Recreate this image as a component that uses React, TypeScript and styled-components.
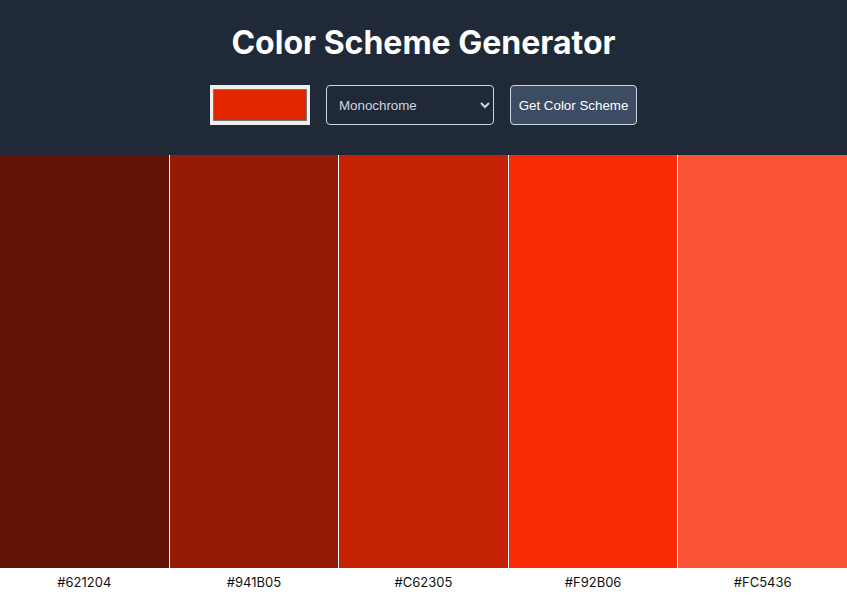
import React, { useState } from "react";
import styled, { createGlobalStyle } from "styled-components";

const Global = createGlobalStyle`
  html, body { margin: 0; padding: 0; background: #ffffff; }
  body { font-family: Inter, "Liberation Sans", sans-serif; }
  * { box-sizing: border-box; }
`;

const Header = styled.header`
  background: #1f2937;
  padding: 24px 0 30px;
  display: flex;
  flex-direction: column;
  align-items: center;
`;

const Title = styled.h1`
  margin: 0 0 23px;
  font-family: Inter, "Liberation Sans", sans-serif;
  font-weight: 700;
  font-size: 32px;
  line-height: 38px;
  color: #ffffff;
`;

const Controls = styled.form`
  display: flex;
  gap: 16px;
  align-items: center;
`;

const ColorInput = styled.input`
  width: 100px;
  height: 40px;
  padding: 4px 3px;
  border: none;
  background: #efefef;
  cursor: pointer;
  &::-webkit-color-swatch-wrapper { padding: 0; }
  &::-webkit-color-swatch { border: 1px solid #777777; }
`;

const Select = styled.select`
  width: 168px;
  height: 40px;
  padding: 0 6px 0 8px;
  background: #1f2937;
  color: #d1d5db;
  border: 1px solid #cbd5e1;
  border-radius: 4px;
  font-family: "Liberation Sans", Arial, sans-serif;
  font-size: 13.33px;
  font-weight: 400;
`;

const Button = styled.button`
  height: 40px;
  width: 127px;
  padding: 0;
  background: #3e4c63;
  color: #ffffff;
  border: 1px solid #cbd5e1;
  border-radius: 4px;
  font-family: "Liberation Sans", Arial, sans-serif;
  font-size: 13.33px;
  font-weight: 400;
  cursor: pointer;
`;

const Palette = styled.main`
  display: flex;
  gap: 1px;
  background: #ffffff;
`;

const Column = styled.div`
  flex: 1;
  display: flex;
  flex-direction: column;
`;

const Swatch = styled.div<{ $color: string }>`
  height: 413px;
  background: ${(p) => p.$color};
`;

const Label = styled.p`
  margin: 0;
  padding: 6px 0 18px;
  text-align: center;
  font-family: Inter, "Liberation Sans", sans-serif;
  font-size: 13px;
  line-height: 16px;
  color: #111111;
`;

const colors = ["#621204", "#941B05", "#C62305", "#F92B06", "#FC5436"];

export default function App() {
  const [seed, setSeed] = useState("#e12600");
  const [mode, setMode] = useState("monochrome");
  return (
    <>
      <Global />
      <Header>
        <Title>Color Scheme Generator</Title>
        <Controls onSubmit={(e) => e.preventDefault()}>
          <ColorInput type="color" value={seed} onChange={(e) => setSeed(e.target.value)} />
          <Select value={mode} onChange={(e) => setMode(e.target.value)}>
            <option value="monochrome">Monochrome</option>
            <option value="monochrome-dark">Monochrome-dark</option>
            <option value="monochrome-light">Monochrome-light</option>
            <option value="analogic">Analogic</option>
            <option value="complement">Complement</option>
            <option value="analogic-complement">Analogic-complement</option>
            <option value="triad">Triad</option>
            <option value="quad">Quad</option>
          </Select>
          <Button type="submit">Get Color Scheme</Button>
        </Controls>
      </Header>
      <Palette>
        {colors.map((c) => (
          <Column key={c}>
            <Swatch $color={c} />
            <Label>{c}</Label>
          </Column>
        ))}
      </Palette>
    </>
  );
}
